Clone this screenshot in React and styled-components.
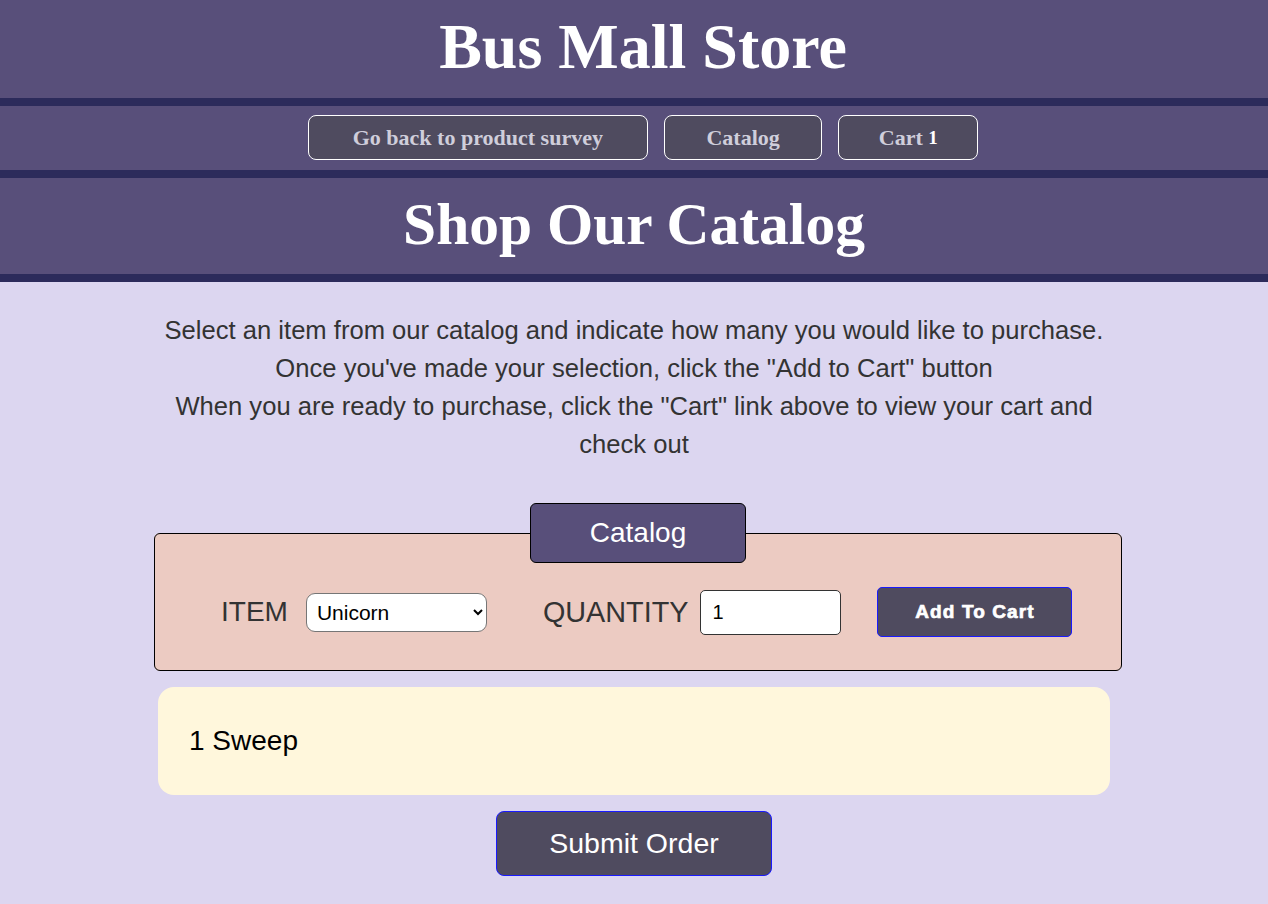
import React from "react";
import styled, { createGlobalStyle } from "styled-components";

const Global = createGlobalStyle`
  html, body { margin: 0; padding: 0; }
  body {
    background: #dcd6f0;
    font-family: "Liberation Sans", Arial, sans-serif;
    color: #333333;
  }
`;

const Band = styled.header`
  background: #584f7a;
  border-bottom: 8px solid #2c2b5b;
  height: ${(p) => p.$h}px;
  display: flex;
  align-items: center;
  justify-content: center;
`;

const Title = styled.h1`
  margin: 0 0 5px;
  padding-left: 18px;
  font-family: "Liberation Serif", "Times New Roman", serif;
  font-weight: bold;
  font-size: 64px;
  color: #ffffff;
`;

const Heading = styled.h2`
  margin: 0 0 4px;
  font-family: "Liberation Serif", "Times New Roman", serif;
  font-weight: bold;
  font-size: 59.5px;
  color: #ffffff;
`;

const Nav = styled.nav`
  display: flex;
  gap: 16px;
  margin: 0 0 1px 18px;
`;

const NavLink = styled.a`
  display: flex;
  align-items: center;
  justify-content: center;
  height: 45px;
  box-sizing: border-box;
  padding: 0 ${(p) => p.$pad || 41}px;
  background: #4f4b5f;
  border: 1px solid #ffffff;
  border-radius: 8px;
  font-family: "Liberation Serif", "Times New Roman", serif;
  font-weight: bold;
  font-size: 22px;
  color: #cfcedb;
  text-decoration: none;
  white-space: pre;
`;

const Count = styled.span`
  color: #ffffff;
  font-size: 19px;
`;

const Main = styled.main`
  display: flex;
  flex-direction: column;
  align-items: center;
`;

const Intro = styled.p`
  width: 952px;
  margin: 29px 0 40px;
  text-align: center;
  font-size: 25.6px;
  line-height: 38px;
  color: #333333;
`;

const Fieldset = styled.fieldset`
  box-sizing: border-box;
  width: 968px;
  margin: 0 0 0 8px;
  padding: 24px 0 33px;
  background: #eccbc2;
  border: 1px solid #000000;
  border-radius: 6px;
`;

const Legend = styled.legend`
  margin: 0 auto;
  box-sizing: border-box;
  width: 216px;
  height: 60px;
  display: flex;
  align-items: center;
  justify-content: center;
  padding: 0;
  background: #584f7a;
  border: 1px solid #000000;
  border-radius: 6px;
  color: #ffffff;
  font-size: 28px;
`;

const Row = styled.div`
  display: flex;
  align-items: center;
  height: 50px;
  padding-left: 66px;
`;

const Label = styled.label`
  font-size: ${(p) => p.$size || 28}px;
  color: #333333;
  margin-right: ${(p) => p.$gap}px;
`;

const Select = styled.select`
  width: 181px;
  height: 39px;
  box-sizing: border-box;
  border: 1px solid #767676;
  border-radius: 9px;
  background: #ffffff;
  font-family: "Liberation Sans", Arial, sans-serif;
  font-size: 21px;
  color: #000000;
  padding: 0 6px;
  margin-right: 56px;
`;

const Input = styled.input`
  width: 141px;
  height: 45px;
  box-sizing: border-box;
  border: 1px solid #333333;
  border-radius: 5px;
  background: #ffffff;
  font-family: "Liberation Sans", Arial, sans-serif;
  font-size: 20px;
  color: #000000;
  padding: 0 11px;
  margin-right: 36px;
`;

const AddButton = styled.button`
  width: 195px;
  height: 50px;
  box-sizing: border-box;
  background: #4f4b5f;
  border: 1px solid #1a1aff;
  border-radius: 5px;
  color: #ffffff;
  font-family: "Liberation Sans", Arial, sans-serif;
  font-weight: bold;
  font-size: 19px;
  letter-spacing: 1.1px;
  -webkit-text-stroke: 0.7px #ffffff;
`;

const CartBox = styled.section`
  box-sizing: border-box;
  width: 952px;
  height: 108px;
  margin-top: 16px;
  padding-left: 31px;
  display: flex;
  align-items: center;
  background: #fff7dc;
  border-radius: 16px;
  font-size: 28px;
  color: #000000;
`;

const SubmitButton = styled.button`
  width: 276px;
  height: 65px;
  box-sizing: border-box;
  margin: 16px 0 28px;
  background: #4f4b5f;
  border: 1px solid #1a1aff;
  border-radius: 8px;
  color: #ffffff;
  font-family: "Liberation Sans", Arial, sans-serif;
  font-size: 28.5px;
`;

export default function App() {
  return (
    <>
      <Global />
      <Band $h={98}>
        <Title>Bus Mall Store</Title>
      </Band>
      <Band $h={64}>
        <Nav>
          <NavLink href="#" $pad={44}>Go back to product survey</NavLink>
          <NavLink href="#" $pad={41.5}>Catalog</NavLink>
          <NavLink href="#" $pad={39.5}>
            Cart <Count>1</Count>
          </NavLink>
        </Nav>
      </Band>
      <Band $h={96}>
        <Heading>Shop Our Catalog</Heading>
      </Band>
      <Main>
        <Intro>
          Select an item from our catalog and indicate how many you would like to purchase.
          <br />
          Once you've made your selection, click the "Add to Cart" button
          <br />
          When you are ready to purchase, click the "Cart" link above to view your cart and check out
        </Intro>
        <Fieldset>
          <Legend>Catalog</Legend>
          <Row>
            <Label $gap={18}>ITEM</Label>
            <Select defaultValue="Unicorn">
              <option>Unicorn</option>
              <option>Sweep</option>
              <option>Bag</option>
            </Select>
            <Label $gap={12} $size={28.8}>QUANTITY</Label>
            <Input type="number" defaultValue="1" />
            <AddButton>Add To Cart</AddButton>
          </Row>
        </Fieldset>
        <CartBox>1 Sweep</CartBox>
        <SubmitButton>Submit Order</SubmitButton>
      </Main>
    </>
  );
}
